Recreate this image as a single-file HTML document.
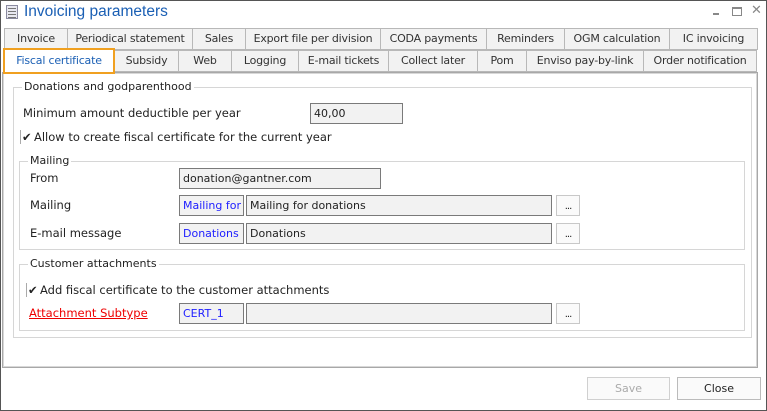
<!DOCTYPE html>
<html><head><meta charset="utf-8"><style>
*{box-sizing:border-box;margin:0;padding:0}
body{width:767px;height:411px;position:relative;background:#fff;font-family:"DejaVu Sans","Liberation Sans",sans-serif;font-size:11.5px;color:#222;overflow:hidden}
.a{position:absolute}
.win{left:0;top:0;width:767px;height:411px;border:1px solid #555}
.tab{position:absolute;height:22px;border:1px solid #b8b8b8;background:#f2f2f2;color:#333;text-align:center;line-height:20px;font-size:11px;white-space:nowrap;letter-spacing:-0.2px}
.inp{position:absolute;border:1px solid #7a7a7a;background:#f2f2f2;height:21px;line-height:19px;padding-left:3px;font-size:11px;white-space:nowrap;overflow:hidden}
.blue{color:#2020ff}
.btn{position:absolute;width:24px;height:21px;border:1px solid #c8c8c8;background:#fafafa;text-align:center;line-height:22px;font-size:10px;letter-spacing:-1px}
.grp{position:absolute;border:1px solid #d6d6d6}
.gl{position:absolute;background:#fff;padding:0 2px;font-size:11px;top:-8px;left:8px}
.lbl{position:absolute;font-size:11.5px}
.chk{position:absolute;font-size:11.5px}
.chk b{font-weight:normal;display:inline-block;width:10px;margin-right:4px;border-left:1px solid #aaa;padding-left:1px}
</style></head><body>
<div class="a win"></div>
<div class="a" style="left:6px;top:5px;width:12px;height:14px;border:1px solid #8a8aa0;background:#e8e8f0"></div>
<div class="a" style="left:8px;top:8px;width:8px;height:1px;background:#777;box-shadow:0 3px #777,0 6px #777,0 9px #777"></div>
<div class="a" style="left:24px;top:3px;font-size:15.5px;color:#1a5fb4;font-family:'Liberation Sans',sans-serif">Invoicing parameters</div>
<div class="a" style="left:713px;top:13px;width:6px;height:2px;background:#888"></div>
<div class="a" style="left:732px;top:7px;width:10px;height:9px;border:1px solid #888;border-top-width:2px"></div>
<div class="a" style="left:751px;top:3px;color:#888;font-size:13px">✕</div>

<div class="tab" style="left:4px;top:28px;width:64px">Invoice</div>
<div class="tab" style="left:67px;top:28px;width:126px">Periodical statement</div>
<div class="tab" style="left:192px;top:28px;width:54px">Sales</div>
<div class="tab" style="left:245px;top:28px;width:136px">Export file per division</div>
<div class="tab" style="left:380px;top:28px;width:107px">CODA payments</div>
<div class="tab" style="left:486px;top:28px;width:79px">Reminders</div>
<div class="tab" style="left:564px;top:28px;width:106px">OGM calculation</div>
<div class="tab" style="left:669px;top:28px;width:89px">IC invoicing</div>

<div class="tab" style="left:114px;top:50px;width:65px">Subsidy</div>
<div class="tab" style="left:178px;top:50px;width:54px">Web</div>
<div class="tab" style="left:231px;top:50px;width:68px">Logging</div>
<div class="tab" style="left:298px;top:50px;width:91px">E-mail tickets</div>
<div class="tab" style="left:388px;top:50px;width:90px">Collect later</div>
<div class="tab" style="left:477px;top:50px;width:50px">Pom</div>
<div class="tab" style="left:526px;top:50px;width:118px">Enviso pay-by-link</div>
<div class="tab" style="left:643px;top:50px;width:114px">Order notification</div>

<div class="a" style="left:2px;top:72px;width:756px;height:296px;border:1px solid #a8a8a8;box-shadow:inset 0 0 0 1px #d8d8d8"></div>
<div class="tab" style="left:3px;top:48px;width:112px;height:26px;background:#fff;border:2px solid #f0a020;color:#1a5fb4;line-height:22px">Fiscal certificate</div>

<div class="grp" style="left:13px;top:87px;width:739px;height:251px"><span class="gl" style="color:#222">Donations and godparenthood</span></div>
<div class="lbl" style="left:23px;top:106px">Minimum amount deductible per year</div>
<div class="inp" style="left:310px;top:103px;width:93px;background:#f2f2f2">40,00</div>
<div class="chk" style="left:20px;top:130px"><b>✔</b>Allow to create fiscal certificate for the current year</div>

<div class="grp" style="left:19px;top:161px;width:726px;height:89px"><span class="gl">Mailing</span></div>
<div class="lbl" style="left:30px;top:171px">From</div>
<div class="inp" style="left:179px;top:168px;width:202px">donation@gantner.com</div>
<div class="lbl" style="left:30px;top:198px">Mailing</div>
<div class="inp blue" style="left:179px;top:195px;width:65px">Mailing for</div>
<div class="inp" style="left:246px;top:195px;width:306px">Mailing for donations</div>
<div class="btn" style="left:556px;top:195px">...</div>
<div class="lbl" style="left:30px;top:226px">E-mail message</div>
<div class="inp blue" style="left:179px;top:223px;width:65px">Donations</div>
<div class="inp" style="left:246px;top:223px;width:306px">Donations</div>
<div class="btn" style="left:556px;top:223px">...</div>

<div class="grp" style="left:19px;top:264px;width:726px;height:67px"><span class="gl">Customer attachments</span></div>
<div class="chk" style="left:26px;top:283px"><b>✔</b>Add fiscal certificate to the customer attachments</div>
<div class="lbl" style="left:29px;top:306px;color:#e00;text-decoration:underline">Attachment Subtype</div>
<div class="inp blue" style="left:179px;top:303px;width:65px">CERT_1</div>
<div class="inp" style="left:246px;top:303px;width:306px"></div>
<div class="btn" style="left:556px;top:303px">...</div>

<div class="a" style="left:587px;top:377px;width:83px;height:23px;border:1px solid #d0d0d0;background:#fafafa;color:#aaa;text-align:center;line-height:21px;font-size:11px">Save</div>
<div class="a" style="left:677px;top:377px;width:84px;height:23px;border:1px solid #bbb;background:#fafafa;text-align:center;line-height:21px;font-size:11px">Close</div>
</body></html>
